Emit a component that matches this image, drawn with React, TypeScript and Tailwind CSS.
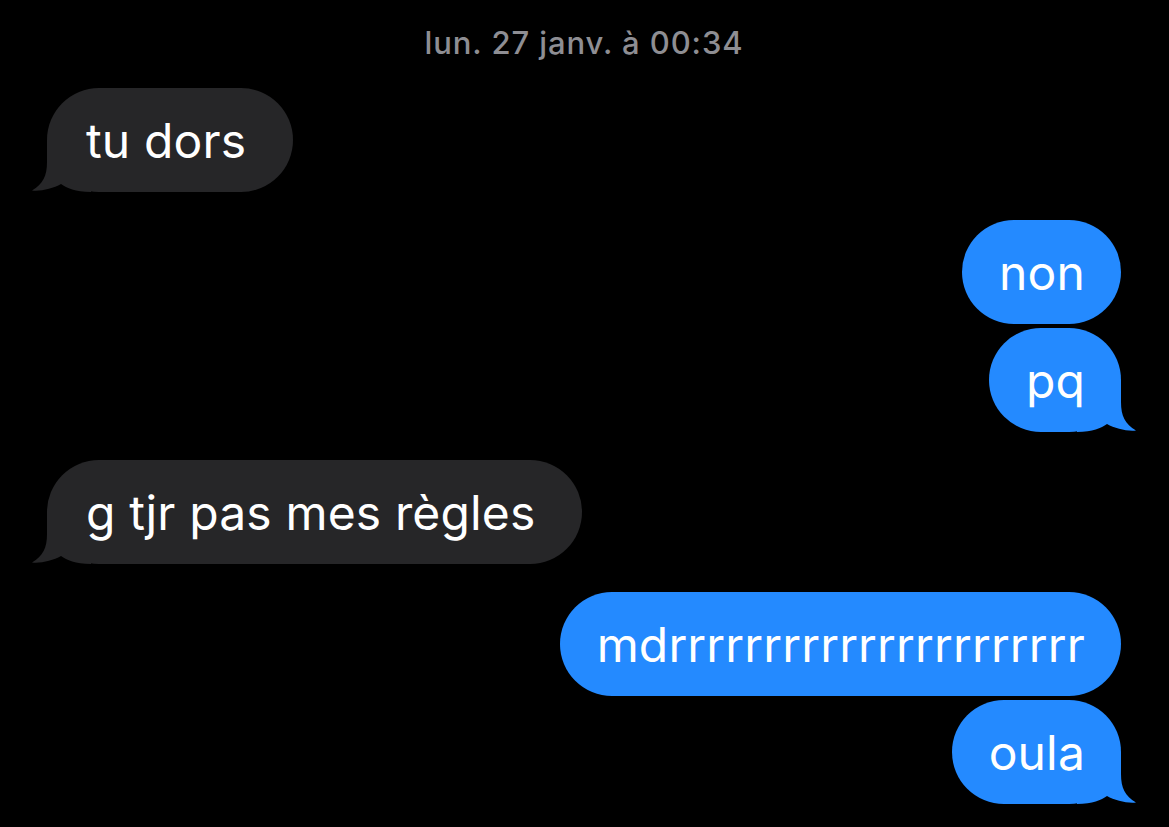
import React from 'react'

type Message = {
  text: string
  fromMe: boolean
  tail?: boolean
}

// consecutive messages from the same side are grouped; the last one carries the tail
const groups: Message[][] = [
  [{ text: 'tu dors', fromMe: false, tail: true }],
  [
    { text: 'non', fromMe: true },
    { text: 'pq', fromMe: true, tail: true },
  ],
  [{ text: 'g tjr pas mes règles', fromMe: false, tail: true }],
  [
    { text: 'mdrrrrrrrrrrrrrrrrrrrrrr', fromMe: true },
    { text: 'oula', fromMe: true, tail: true },
  ],
]

const Tail = ({ fromMe }: { fromMe: boolean }) => (
  <svg
    viewBox="0 0 60 60"
    className={
      fromMe
        ? 'absolute -right-[16px] bottom-0 w-[60px] h-[60px] -scale-x-100 fill-[#248aff]'
        : 'absolute -left-[16px] bottom-0 w-[60px] h-[60px] fill-[#262628]'
    }
  >
    <path d="M16 8 L16 30 C16 44 12 52 1 58.5 C10 59.5 22 56.5 30 52 C36 56 44 60 60 60 L60 8 Z" />
  </svg>
)

const Bubble = ({ msg }: { msg: Message }) => (
  <div className={msg.fromMe ? 'flex justify-end' : 'flex justify-start'}>
    <div
      className={
        msg.fromMe
          ? 'relative h-[104px] flex items-center rounded-[52px] bg-[#248aff] pl-[37px] pr-[36px]'
          : 'relative h-[104px] flex items-center rounded-[52px] bg-[#262628] pl-[39px] pr-[47px]'
      }
    >
      {msg.tail && <Tail fromMe={msg.fromMe} />}
      <span className="relative top-[1px] text-white text-[48px] leading-none tracking-[0.15px]">{msg.text}</span>
    </div>
  </div>
)

export default function App() {
  return (
    <div
      className="min-h-screen bg-black pl-[47px] pr-[48px] pt-[26px]"
      style={{ fontFamily: 'Inter, "Noto Sans", sans-serif' }}
    >
      <div className="text-center text-[#8e8e93] text-[31px] leading-[34px] font-medium tracking-[0.9px]">
        lun. 27 janv. à 00:34
      </div>
      <div className="mt-[28px] flex flex-col gap-[28px]">
        {groups.map((group, gi) => (
          <div key={gi} className="flex flex-col gap-[4px]">
            {group.map((msg, mi) => (
              <Bubble key={mi} msg={msg} />
            ))}
          </div>
        ))}
      </div>
    </div>
  )
}
